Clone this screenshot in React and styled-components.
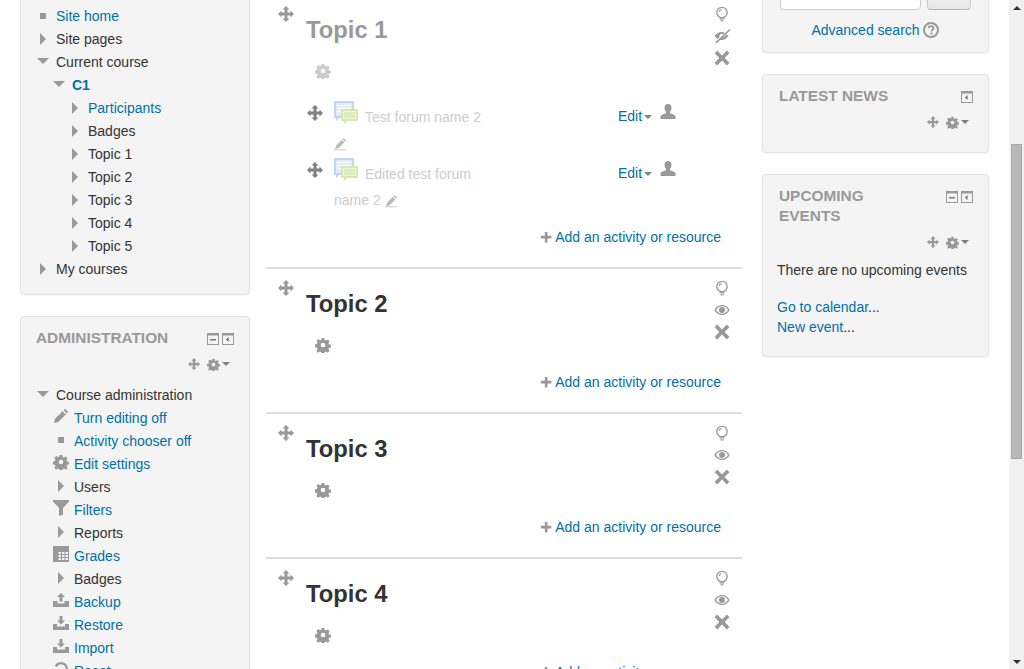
import React from 'react';
import styled, { createGlobalStyle } from 'styled-components';

const GlobalStyle = createGlobalStyle`
  html, body { margin: 0; height: 100%; overflow: hidden; background: #fff; }
  body { font-family: "Liberation Sans", Arial, sans-serif; font-size: 14px; color: #333; }
`;

const Viewport = styled.div`
  display: flex;
  height: 669px;
  overflow: hidden;
`;

const Page = styled.div`
  flex: 1;
  min-width: 0;
`;

const Columns = styled.div`
  display: grid;
  grid-template-columns: 230px 476px 231px;
  column-gap: 16px;
  align-items: start;
  margin-top: -28px;
  padding-left: 20px;
`;

const Side = styled.div`
  display: flex;
  flex-direction: column;
  gap: 21px;
`;

const RightSide = styled(Side)`
  margin-left: 4px;
`;

const Block = styled.div`
  background: #f4f4f4;
  border: 1px solid #e3e3e3;
  border-radius: 4px;
  box-shadow: 0 1px 1px rgba(0, 0, 0, 0.03);
  padding: ${p => p.$padding || '8px'};
  min-height: ${p => p.$minHeight || 'auto'};
`;

const BlockHead = styled.div`
  display: flex;
  justify-content: space-between;
  align-items: flex-start;
`;

const BlockTitle = styled.h2`
  margin: 0;
  font-size: 15.4px;
  line-height: 20px;
  font-weight: bold;
  color: #999;
  text-transform: uppercase;
  width: ${p => p.$width || 'auto'};
`;

const BoxGroup = styled.div`
  display: flex;
  gap: 3px;
  padding-top: 5px;
`;

const ControlRow = styled.div`
  display: flex;
  justify-content: flex-end;
  align-items: center;
  gap: 7px;
  height: 16px;
  color: #999;
  margin: ${p => p.$margin || '0'};
  padding-right: 4px;
`;

const GearWithCaret = styled.span`
  display: flex;
  align-items: center;
`;

const Tree = styled.ul`
  list-style: none;
  margin: 0;
  padding: 0;
`;

const AdminTree = styled.div`
  margin-left: -15px;
`;

const TreeRow = styled.li`
  display: flex;
  align-items: center;
  height: 23px;
  padding-left: ${p => p.$indent}px;
  color: ${p => (p.$link ? '#0070a8' : '#333')};
  font-weight: ${p => (p.$bold ? 'bold' : 'normal')};
  white-space: nowrap;
`;

const TreeIcon = styled.span`
  display: flex;
  justify-content: center;
  align-items: center;
  flex: none;
  width: ${p => (p.$wide ? 16 : 12)}px;
  height: 16px;
  margin-right: ${p => (p.$wide ? 5 : 7)}px;
  margin-top: ${p => (p.$wide ? -4 : -3)}px;
  color: #999;
`;

const Bullet = styled.i`
  display: block;
  width: 6px;
  height: 6px;
  margin-top: 3px;
  background: #999;
`;

const ArrowRight = styled.i`
  display: block;
  margin-top: 3px;
  border-top: 6px solid transparent;
  border-bottom: 6px solid transparent;
  border-left: 6px solid #999;
  width: 0;
  height: 0;
`;

const ArrowDown = styled.i`
  display: block;
  margin-top: 2px;
  border-left: 6px solid transparent;
  border-right: 6px solid transparent;
  border-top: 6px solid #999;
  width: 0;
  height: 0;
`;

const Section = styled.section`
  display: grid;
  grid-template-columns: 40px 1fr 40px;
  border-bottom: 2px solid #ddd;
  height: ${p => p.$height}px;
  box-sizing: border-box;
  padding-top: ${p => p.$top || 11}px;
  &:last-child { border-bottom: 0; }
`;

const Gutter = styled.div`
  display: flex;
  justify-content: center;
  color: #999;
`;

const SectionBody = styled.div`
  min-width: 0;
`;

const SectionTitle = styled.h3`
  margin: 0;
  padding-top: 10px;
  font-size: 23.8px;
  line-height: 28px;
  font-weight: bold;
  color: ${p => (p.$hidden ? '#999' : '#333')};
`;

const SummaryGear = styled.div`
  display: flex;
  color: ${p => (p.$hidden ? '#ccc' : '#999')};
  height: 16px;
  margin: 19px 0 0 9px;
`;

const ActionStack = styled.div`
  display: flex;
  flex-direction: column;
  align-items: center;
  gap: 6px;
  color: #999;
`;

const Activities = styled.div`
  display: flex;
  flex-direction: column;
  margin-top: 22px;
`;

const Activity = styled.div`
  display: flex;
  align-items: flex-start;
  height: ${p => p.$height}px;
`;

const ActivityMove = styled.div`
  flex: none;
  width: 28px;
  padding: 4px 0 0 1px;
  box-sizing: border-box;
  color: #808080;
`;

const ActivityName = styled.div`
  flex: none;
  width: 155px;
  color: #ccc;
  line-height: 26px;
`;

const ForumWrap = styled.span`
  display: inline-block;
  vertical-align: -3px;
  width: 24px;
  height: 24px;
  margin-right: 7px;
  opacity: 0.42;
`;

const Pencil = styled.span`
  display: inline-block;
  vertical-align: -4px;
  width: 14px;
  height: 14px;
  color: #bbb;
`;

const ActivityActions = styled.div`
  display: flex;
  align-items: flex-start;
  margin-left: 129px;
  padding-top: 7px;
  color: #0070a8;
`;

const Caret = styled.i`
  display: inline-block;
  flex: none;
  width: 0;
  height: 0;
  border-left: 4px solid transparent;
  border-right: 4px solid transparent;
  border-top: 4px solid #808080;
  margin: ${p => p.$margin || '7px 0 0 2px'};
`;

const UserSlot = styled.div`
  margin: -4px 0 0 8px;
  color: #999;
`;

const AddRow = styled.div`
  display: flex;
  justify-content: flex-end;
  align-items: center;
  margin-top: ${p => p.$top}px;
  margin-right: -19px;
  color: #0070a8;
  line-height: 20px;
`;

const PlusSlot = styled.span`
  display: flex;
  color: #999;
  margin: 2px 1px 0 0;
`;

const SearchFields = styled.div`
  display: flex;
  gap: 6px;
  padding-left: 9px;
`;

const SearchInput = styled.div`
  width: 141px;
  height: 37px;
  box-sizing: border-box;
  background: #fff;
  border: 1px solid #ccc;
  border-radius: 4px;
`;

const SearchButton = styled.div`
  width: 44px;
  height: 37px;
  box-sizing: border-box;
  background: linear-gradient(#fff, #e6e6e6);
  border: 1px solid #ccc;
  border-bottom-color: #b3b3b3;
  border-radius: 4px;
`;

const AdvancedRow = styled.div`
  display: flex;
  justify-content: center;
  align-items: center;
  gap: 3px;
  color: #0070a8;
  line-height: 20px;
  margin-top: 10px;
  padding-right: 1px;
`;

const BlockText = styled.div`
  line-height: 20px;
  margin-top: ${p => p.$top || 0}px;
  margin-left: -2px;
`;

const BlockLink = styled.div`
  color: #0070a8;
  & span { color: #333; }
`;

const Scrollbar = styled.div`
  flex: none;
  width: 15px;
  height: 669px;
  background: #f1f1f1;
  box-sizing: border-box;
  padding: 0 2px;
  display: flex;
  flex-direction: column;
`;

const ScrollArrow = styled.div`
  height: 15px;
  display: flex;
  justify-content: center;
  align-items: center;
  margin-top: ${p => (p.$down ? 'auto' : '0')};
  &::before {
    content: '';
    border-left: 4px solid transparent;
    border-right: 4px solid transparent;
    border-bottom: ${p => (p.$down ? '0' : '4px solid #333')};
    border-top: ${p => (p.$down ? '4px solid #333' : '0')};
  }
`;

const ScrollThumb = styled.div`
  margin-top: 129px;
  height: 315px;
  box-sizing: border-box;
  background: #b8b8b8;
  border: 1px solid #a8a8a8;
`;

const Svg = ({ size = 16, children }) => (
  <svg width={size} height={size} viewBox="0 0 16 16" fill="currentColor" style={{ display: 'block' }}>
    {children}
  </svg>
);

const MOVE_PATH = 'M8 0l3.500 3.500h-2v3h3v-2L16 8l-3.500 3.500v-2h-3v3h2L8 16l-3.500-3.500h2v-3h-3v2L0 8l3.500-3.500v2h3v-3h-2z';

const MoveIcon = ({ size }) => (
  <Svg size={size}>
    <path d={MOVE_PATH} />
  </Svg>
);

const GearIcon = ({ size }) => (
  <Svg size={size}>
    <path
      fillRule="evenodd"
      d="M6.700 1h2.600l.4 2 1.300.6 1.800-1.100 1.800 1.800-1.100 1.800.6 1.300 2 .4v2.600l-2 .4-.6 1.300 1.100 1.800-1.800 1.800-1.800-1.100-1.300.6-.4 2H6.700l-.4-2-1.300-.6-1.800 1.100-1.800-1.800 1.100-1.800-.6-1.300-2-.4V7.400l2-.4.6-1.300L1.400 3.900l1.800-1.800L5 3.200l1.300-.6zM8 5.700a2.300 2.300 0 1 0 0 4.600 2.300 2.300 0 0 0 0-4.600z"
    />
  </Svg>
);

const CloseIcon = () => (
  <Svg>
    <path d="M3.200.6 8 5.400 12.800.6l2.600 2.600L10.600 8l4.800 4.800-2.600 2.600L8 10.600l-4.800 4.800-2.600-2.600L5.400 8 .6 3.200z" />
  </Svg>
);

const BulbIcon = () => (
  <Svg>
    <circle cx="8" cy="6.500" r="5.200" fill="none" stroke="currentColor" strokeWidth="1.300" />
    <path d="M4.500 5.500a3.500 3.500 0 0 1 3-2.500v1.300a2.400 2.400 0 0 0-1.800 1.600z" />
    <path d="M5.500 12.300h5v1.200h-5zM6.500 14.300h3v1.100h-3z" />
  </Svg>
);

const EyeIcon = () => (
  <Svg>
    <path
      fillRule="evenodd"
      d="M8 3c3.500 0 6.300 2.400 7.600 5-1.300 2.600-4.100 5-7.600 5S1.700 10.600.4 8C1.700 5.400 4.500 3 8 3zm0 1.300C5.400 4.300 3.200 6 2 8c1.200 2 3.400 3.700 6 3.700s4.800-1.700 6-3.700c-1.200-2-3.400-3.700-6-3.700zM8 5a3 3 0 1 1 0 6 3 3 0 0 1 0-6z"
    />
  </Svg>
);

const EyeOffIcon = () => (
  <Svg>
    <path
      fillRule="evenodd"
      d="M7.500 4c1.400 0 2.600.3 3.700.9L8.800 6.200A2.300 2.300 0 0 0 5.500 9L3.800 10.900C2.400 10.100 1.300 9 .6 8 1.900 5.700 4.500 4 7.500 4z"
    />
    <path d="M15.800.8 16 2.500 3 15l-2-.5zM13 6.500l1.500 1c-1.300 2.700-3.800 4.500-7 4.500l-1.400-.2z" />
  </Svg>
);

const UserIcon = () => (
  <Svg>
    <path d="M8 0c2.200 0 3.500 1.700 3.500 3.900 0 1.500-.7 3-1.500 3.900v1.400c2 .7 5.500 1.600 5.500 3.300V15H.5v-2.500c0-1.700 3.500-2.600 5.500-3.300V7.800C5.200 6.900 4.500 5.400 4.500 3.900 4.500 1.700 5.800 0 8 0z" />
  </Svg>
);

const PencilIcon = () => (
  <Svg>
    <path d="M12 .8 15.200 4l-1.500 1.500-3.200-3.200zM9.600 3.200l3.200 3.200-7.600 7.600L1 15l1-4.200z" />
  </Svg>
);

const SmallPencilIcon = () => (
  <Svg size={14}>
    <path d="M11 0l3 3-1.300 1.300-3-3zM8.900 2.100l3 3-6.500 6.500-4 1 1-4zM0 13h14v1H0z" />
  </Svg>
);

const FilterIcon = () => (
  <Svg>
    <path d="M0 0h16v1.500L10 8v6.500L6 16V8L0 1.500z" />
  </Svg>
);

const GradesIcon = () => (
  <Svg>
    <path
      fillRule="evenodd"
      d="M0 0h16v16H0zM5.500 6v2h2.500V6zM9 6v2h2.500V6zM12.500 6v2H15V6zM5.500 9v2h2.500V9zM9 9v2h2.500V9zM12.500 9v2H15V9zM5.500 12v2h2.500v-2zM9 12v2h2.500v-2zM12.500 12v2H15v-2z"
    />
  </Svg>
);

const TrayUpIcon = () => (
  <Svg>
    <path d="M8 1l4 4H9.500v4.500h-3V5H4zM0 9h4.500v2.500h7V9H16v6H0z" />
  </Svg>
);

const TrayDownIcon = () => (
  <Svg>
    <path d="M6.500 1h3v4.500H12L8 9.500l-4-4h2.500zM0 9h4v2.500h8V9h4v6H0z" />
  </Svg>
);

const ResetIcon = () => (
  <Svg>
    <path d="M8 1a7 7 0 0 1 7 7h-2.300A4.700 4.700 0 0 0 3.800 6L1.800 4.800A7 7 0 0 1 8 1z" />
  </Svg>
);

const PlusIcon = () => (
  <Svg size={14}>
    <path d="M5.500 1h3v4.500H13v3H8.500V13h-3V8.500H1v-3h4.500z" />
  </Svg>
);

const HelpIcon = () => (
  <svg width="16" height="16" viewBox="0 0 16 16" style={{ display: 'block' }}>
    <circle cx="8" cy="8" r="7" fill="none" stroke="#999" strokeWidth="2" />
    <path d="M5.500 6.300C5.600 5 6.700 4.100 8 4.100c1.400 0 2.500.9 2.500 2.100 0 1.800-2.100 1.700-2.100 3.200" fill="none" stroke="#999" strokeWidth="1.800" />
    <rect x="7.400" y="10.500" width="2" height="2" fill="#999" />
  </svg>
);

const MinusBox = () => (
  <svg width="12" height="12" viewBox="0 0 12 12" style={{ display: 'block' }}>
    <rect x=".5" y=".5" width="11" height="11" fill="none" stroke="#999" />
    <path d="M.5 0h11v2.500H.5z" fill="#999" />
    <path d="M3 6h6v1.500H3z" fill="#777" />
  </svg>
);

const DockBox = () => (
  <svg width="12" height="12" viewBox="0 0 12 12" style={{ display: 'block' }}>
    <rect x=".5" y=".5" width="11" height="11" fill="none" stroke="#999" />
    <path d="M.5 0h11v2.500H.5z" fill="#999" />
    <path d="M6.500 4 4 6.500 6.500 9z" fill="#666" />
  </svg>
);

const ForumIcon = () => (
  <svg width="24" height="24" viewBox="0 0 24 24" style={{ display: 'block' }}>
    <path d="M1 0h18a1 1 0 0 1 1 1v15a1 1 0 0 1-1 1H5l-3 3v-3H1a1 1 0 0 1-1-1V1a1 1 0 0 1 1-1z" fill="#6d9eeb" />
    <path d="M2 2h16v13H2z" fill="#b9d0fa" />
    <path d="M3 4h14v1H3zM3 7h14v1H3zM3 10h14v1H3z" fill="#fff" />
    <path d="M8 8h15a1 1 0 0 1 1 1v10a1 1 0 0 1-1 1H13l-3 3v-3H8a1 1 0 0 1-1-1V9a1 1 0 0 1 1-1z" fill="#9ccc3c" />
    <path d="M9 10h13v8H9z" fill="#d5ea9c" />
    <path d="M10 11.500h11v1H10zM10 13.500h11v1H10zM10 15.500h11v1H10z" fill="#8eb733" />
  </svg>
);

const TREE_ICONS = {
  closed: <ArrowRight />,
  open: <ArrowDown />,
  pencil: <PencilIcon />,
  bullet: <Bullet />,
  gear: <GearIcon />,
  filter: <FilterIcon />,
  grades: <GradesIcon />,
  up: <TrayUpIcon />,
  down: <TrayDownIcon />,
  reset: <ResetIcon />,
};

const NAV = [
  { label: 'Site home', indent: 16, kind: 'bullet', link: true },
  { label: 'Site pages', indent: 16, kind: 'closed' },
  { label: 'Current course', indent: 16, kind: 'open' },
  { label: 'C1', indent: 32, kind: 'open', link: true, bold: true },
  { label: 'Participants', indent: 48, kind: 'closed', link: true },
  { label: 'Badges', indent: 48, kind: 'closed' },
  { label: 'Topic 1', indent: 48, kind: 'closed' },
  { label: 'Topic 2', indent: 48, kind: 'closed' },
  { label: 'Topic 3', indent: 48, kind: 'closed' },
  { label: 'Topic 4', indent: 48, kind: 'closed' },
  { label: 'Topic 5', indent: 48, kind: 'closed' },
  { label: 'My courses', indent: 16, kind: 'closed' },
];

const ADMIN = [
  { label: 'Course administration', indent: 16, kind: 'open' },
  { label: 'Turn editing off', indent: 32, kind: 'pencil', link: true, wide: true },
  { label: 'Activity chooser off', indent: 32, kind: 'bullet', link: true, wide: true },
  { label: 'Edit settings', indent: 32, kind: 'gear', link: true, wide: true },
  { label: 'Users', indent: 32, kind: 'closed', wide: true },
  { label: 'Filters', indent: 32, kind: 'filter', link: true, wide: true },
  { label: 'Reports', indent: 32, kind: 'closed', wide: true },
  { label: 'Grades', indent: 32, kind: 'grades', link: true, wide: true },
  { label: 'Badges', indent: 32, kind: 'closed', wide: true },
  { label: 'Backup', indent: 32, kind: 'up', link: true, wide: true },
  { label: 'Restore', indent: 32, kind: 'down', link: true, wide: true },
  { label: 'Import', indent: 32, kind: 'down', link: true, wide: true },
  { label: 'Reset', indent: 32, kind: 'reset', link: true, wide: true },
];

const TOPICS = ['Topic 2', 'Topic 3', 'Topic 4'];

function TreeList({ items }) {
  return (
    <Tree>
      {items.map((item, i) => (
        <TreeRow key={i} $indent={item.indent} $link={item.link} $bold={item.bold}>
          <TreeIcon $wide={item.wide}>{TREE_ICONS[item.kind]}</TreeIcon>
          {item.label}
        </TreeRow>
      ))}
    </Tree>
  );
}

function BlockControls({ margin }) {
  return (
    <ControlRow $margin={margin}>
      <MoveIcon size={12} />
      <GearWithCaret>
        <GearIcon size={13} />
        <Caret $margin="0 0 0 2px" />
      </GearWithCaret>
    </ControlRow>
  );
}

function SectionActions({ hidden }) {
  return (
    <ActionStack>
      <BulbIcon />
      {hidden ? <EyeOffIcon /> : <EyeIcon />}
      <CloseIcon />
    </ActionStack>
  );
}

function AddActivity({ top }) {
  return (
    <AddRow $top={top}>
      <PlusSlot><PlusIcon /></PlusSlot>
      Add an activity or resource
    </AddRow>
  );
}

function ActivityItem({ name, height }) {
  return (
    <Activity $height={height}>
      <ActivityMove><MoveIcon /></ActivityMove>
      <ActivityName>
        <ForumWrap><ForumIcon /></ForumWrap>
        {name} <Pencil><SmallPencilIcon /></Pencil>
      </ActivityName>
      <ActivityActions>
        Edit
        <Caret />
        <UserSlot><UserIcon /></UserSlot>
      </ActivityActions>
    </Activity>
  );
}

export default function App() {
  return (
    <Viewport>
      <GlobalStyle />
      <Page>
        <Columns>
          <Side>
            <Block $padding="31px 0 14px">
              <TreeList items={NAV} />
            </Block>
            <Block $padding="11px 15px 0" $minHeight="400px">
              <BlockHead>
                <BlockTitle>Administration</BlockTitle>
                <BoxGroup>
                  <MinusBox />
                  <DockBox />
                </BoxGroup>
              </BlockHead>
              <BlockControls margin="8px 0 11px" />
              <AdminTree>
                <TreeList items={ADMIN} />
              </AdminTree>
            </Block>
          </Side>

          <div>
            <Section $height={297} $top={34}>
              <Gutter><MoveIcon /></Gutter>
              <SectionBody>
                <SectionTitle $hidden>Topic 1</SectionTitle>
                <SummaryGear $hidden><GearIcon /></SummaryGear>
                <Activities>
                  <ActivityItem name="Test forum name 2" height={57} />
                  <ActivityItem name="Edited test forum name 2" height={54} />
                </Activities>
                <AddActivity top={15} />
              </SectionBody>
              <Gutter><SectionActions hidden /></Gutter>
            </Section>
            {TOPICS.map(t => (
              <Section key={t} $height={145}>
                <Gutter><MoveIcon /></Gutter>
                <SectionBody>
                  <SectionTitle>{t}</SectionTitle>
                  <SummaryGear><GearIcon /></SummaryGear>
                  <AddActivity top={19} />
                </SectionBody>
                <Gutter><SectionActions /></Gutter>
              </Section>
            ))}
          </div>

          <RightSide>
            <Block $padding="0 8px 12px" $minHeight="67px">
              <SearchFields>
                <SearchInput />
                <SearchButton />
              </SearchFields>
              <AdvancedRow>
                Advanced search <HelpIcon />
              </AdvancedRow>
            </Block>
            <Block $padding="11px 15px 0 16px" $minHeight="66px">
              <BlockHead>
                <BlockTitle>Latest news</BlockTitle>
                <BoxGroup><DockBox /></BoxGroup>
              </BlockHead>
              <BlockControls margin="8px 0 0" />
            </Block>
            <Block $padding="11px 15px 19px 16px">
              <BlockHead>
                <BlockTitle $width="120px">Upcoming events</BlockTitle>
                <BoxGroup>
                  <MinusBox />
                  <DockBox />
                </BoxGroup>
              </BlockHead>
              <BlockControls margin="8px 0 10px" />
              <BlockText>There are no upcoming events</BlockText>
              <BlockText $top={17}>
                <BlockLink>Go to calendar<span>...</span></BlockLink>
                <BlockLink>New event<span>...</span></BlockLink>
              </BlockText>
            </Block>
          </RightSide>
        </Columns>
      </Page>
      <Scrollbar>
        <ScrollArrow />
        <ScrollThumb />
        <ScrollArrow $down />
      </Scrollbar>
    </Viewport>
  );
}
